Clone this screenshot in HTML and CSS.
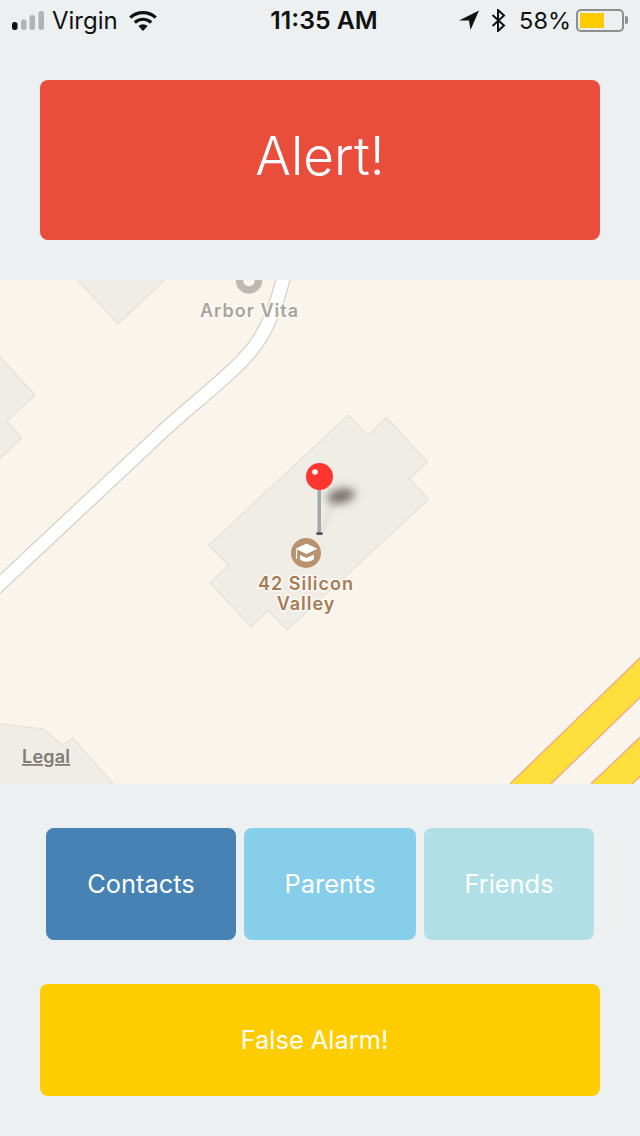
FILE: index.html
```html
<!DOCTYPE html>
<html lang="en">

<head>
    <meta charset="UTF-8">
    <meta name="viewport" content="width=device-width, initial-scale=1.0">
    <title>Alert</title>
    <link rel="stylesheet" href="styles.css">
</head>

<body>
    <header class="status-bar">
        <div class="status-left">
            <svg class="signal" width="33" height="19" viewBox="0 0 33 19">
                <rect x="0" y="11" width="5.5" height="8" rx="2.5" fill="#111"/>
                <rect x="9" y="8.5" width="5.5" height="10.500" rx="2.5" fill="#b1b4b4"/>
                <rect x="17.500" y="4" width="5.500" height="15" rx="2.500" fill="#b1b4b4"/>
                <rect x="26.500" y="0" width="5.500" height="19" rx="2.500" fill="#b1b4b4"/>
            </svg>
            <span class="carrier">Virgin</span>
            <svg class="wifi" width="30" height="21" viewBox="0 0 30 21">
                <path d="M15 21 L10.300 16 A7 7 0 0 1 19.700 16 Z" fill="#111"/>
                <path d="M6.800 12.500 A12 12 0 0 1 23.200 12.500" fill="none" stroke="#111" stroke-width="3.200"/>
                <path d="M2.300 7.600 A18.500 18.500 0 0 1 27.700 7.600" fill="none" stroke="#111" stroke-width="3.200"/>
            </svg>
        </div>
        <div class="status-time">11:35 AM</div>
        <div class="status-right">
            <svg width="20" height="20" viewBox="0 0 20 20"><path d="M0 10.500 L20 0.500 L11.500 20 L10 10.500 Z" fill="#111"/></svg>
            <svg class="bluetooth" width="15" height="23" viewBox="0 0 15 23">
                <path d="M1.500 6 L13 16.500 L7 22 L7 1 L13 6.500 L1.500 17" fill="none" stroke="#111" stroke-width="2"/>
            </svg>
            <span class="battery-text">58%</span>
            <div class="battery">
                <div class="battery-body"><div class="battery-fill"></div></div>
                <div class="battery-nub"></div>
            </div>
        </div>
    </header>

    <main>
        <div class="alert-wrap">
            <button class="btn btn-alert" type="button">Alert!</button>
        </div>

        <section class="map">
            <svg width="640" height="504" viewBox="0 280 640 504">
                <defs>
                    <filter id="pinShadow" x="-100%" y="-150%" width="300%" height="400%">
                        <feGaussianBlur stdDeviation="5"/>
                    </filter>
                    <filter id="stemShadow" x="-100%" y="-50%" width="300%" height="200%">
                        <feGaussianBlur stdDeviation="2.500"/>
                    </filter>
                </defs>
                <rect x="0" y="280" width="640" height="504" fill="#f9f5ed"/>

                <g fill="#f0ede6" stroke="#e4e0d8" stroke-width="1.200">
                    <path d="M77 279 L117.700 324 L165.700 279 Z"/>
                    <path d="M-2 355 L35 395 L6.700 421 L21.700 438 L-2 460 Z"/>
                    <path d="M-2 724 L3 724 L43 729 L62 745 L73 738 L114 785 L-2 785 Z"/>
                    <path d="M348.300 415 L367.700 435.700 L386.700 417.700 L427.700 462 L409.300 479 L428.700 499.300 L287 630 L268 610 L251 627 L210 582.700 L228.300 565 L209 545 Z"/>
                </g>

                <path class="road-case" d="M-8 591.500 L160 434 C192 404 234 373 254 347 C268 328.500 277 305 284 275"/>
                <path class="road-fill" d="M-8 591.500 L160 434 C192 404 234 373 254 347 C268 328.500 277 305 284 275"/>

                <path class="highway-case" d="M520 794 L650 668"/>
                <path class="highway-fill" d="M520 794 L650 668"/>
                <path class="highway-case" d="M601 794 L650 747.500"/>
                <path class="highway-fill" d="M601 794 L650 747.500"/>

                <circle cx="249" cy="280.500" r="9.500" fill="none" stroke="#bdb9b2" stroke-width="7.500"/>
                <text class="label label-grey" x="249.500" y="317">Arbor Vita</text>

                <path d="M321 533 L333 503" stroke="#8a867e" stroke-width="4" opacity="0.15" filter="url(#stemShadow)"/>
                <ellipse cx="341" cy="496" rx="14" ry="7" fill="#6f6b63" transform="rotate(-12 341 496)" filter="url(#pinShadow)"/>
                <rect x="317.500" y="489" width="3.500" height="44" fill="#a5a8ac"/>
                <ellipse cx="319.500" cy="533.500" rx="3.500" ry="1.500" fill="#55565a"/>
                <circle cx="319.500" cy="476.500" r="13.500" fill="#fd3730"/>
                <circle cx="315" cy="472" r="2.800" fill="#fff"/>

                <circle cx="306" cy="553" r="15" fill="#b8926e"/>
                <path d="M306.500 543.500 L317.500 548.800 L306.500 554 L295.500 548.800 Z" fill="#fff"/>
                <path d="M300 555 L306.500 558 L314 554.500 L314 559 C310 562.500 304 562.500 300 559.500 Z" fill="#fff"/>
                <path d="M296.500 549.500 L296.500 559" stroke="#fff" stroke-width="1.200"/>

                <text class="label label-brown" x="306" y="590">42 Silicon</text>
                <text class="label label-brown" x="306" y="610">Valley</text>

                <text class="legal" x="22" y="763">Legal</text>
            </svg>
        </section>

        <div class="group-row">
            <button class="btn btn-contacts" type="button">Contacts</button>
            <button class="btn btn-parents" type="button">Parents</button>
            <button class="btn btn-friends" type="button">Friends</button>
        </div>

        <div class="false-wrap">
            <button class="btn btn-false" type="button">False Alarm!</button>
        </div>
    </main>
</body>

</html>
```

FILE: styles.css
```css
* {
    margin: 0;
    padding: 0;
    box-sizing: border-box;
}

body {
    width: 640px;
    height: 1136px;
    overflow: hidden;
    background-color: #ecf0f1;
    font-family: "Inter", "Liberation Sans", sans-serif;
}

.status-bar {
    display: flex;
    align-items: center;
    justify-content: space-between;
    height: 40px;
    padding: 0 12px;
    color: #111;
    font-size: 24px;
}

.status-left,
.status-right {
    display: flex;
    align-items: center;
    flex: 1;
}

.status-right {
    justify-content: flex-end;
}

.status-time {
    font-weight: 600;
    font-size: 24.800px;
    padding-left: 8px;
}

.carrier {
    margin-left: 7px;
}

.wifi {
    margin-left: 10px;
}

.bluetooth {
    margin-left: 12px;
}

.battery-text {
    margin-left: 13px;
    font-size: 23.500px;
}

.battery {
    display: flex;
    align-items: center;
    margin-left: 5px;
}

.battery-body {
    width: 48px;
    height: 23px;
    padding: 2px;
    border: 2px solid #8e8e8e;
    border-radius: 5px;
}

.battery-fill {
    width: 24px;
    height: 100%;
    background-color: #ffcc00;
}

.battery-nub {
    width: 3px;
    height: 8px;
    background-color: #8e8e8e;
    border-radius: 0 2px 2px 0;
    margin-left: 1px;
}

.btn {
    display: block;
    border: none;
    border-radius: 8px;
    padding-bottom: 2px;
    color: #fff;
    font-family: inherit;
    font-size: 25.400px;
}

.alert-wrap {
    padding: 40px;
}

.btn-alert {
    width: 100%;
    height: 160px;
    padding-bottom: 9px;
    background-color: #e94d3c;
    font-size: 53px;
    font-weight: 350;
}

.map {
    height: 504px;
}

.map svg {
    display: block;
}

.road-case {
    fill: none;
    stroke: #d8d1c3;
    stroke-width: 15;
}

.road-fill {
    fill: none;
    stroke: #fff;
    stroke-width: 12.500;
}

.highway-case {
    fill: none;
    stroke: #eeb088;
    stroke-width: 30;
}

.highway-fill {
    fill: none;
    stroke: #ffdf3b;
    stroke-width: 27;
}

.label {
    font-size: 18px;
    font-weight: 600;
    letter-spacing: 1px;
    text-anchor: middle;
    paint-order: stroke;
    stroke: #fbf9f4;
    stroke-width: 3px;
    stroke-linejoin: round;
}

.label-grey {
    fill: #a8a59f;
}

.label-brown {
    fill: #a97b55;
}

.legal {
    font-size: 18px;
    font-weight: 600;
    letter-spacing: 0.200px;
    fill: #7f7c76;
    text-decoration: underline;
}

.group-row {
    display: flex;
    gap: 8px;
    padding: 44px 46px 0;
}

.group-row .btn {
    height: 112px;
}

.btn-contacts {
    width: 190px;
    background-color: #4682b4;
}

.btn-parents {
    width: 172px;
    background-color: #87ceeb;
}

.btn-friends {
    width: 170px;
    background-color: #b0e0e6;
}

.false-wrap {
    padding: 44px 40px 40px;
}

.btn-false {
    width: 100%;
    height: 112px;
    padding-right: 11px;
    background-color: #ffcc00;
}
```
